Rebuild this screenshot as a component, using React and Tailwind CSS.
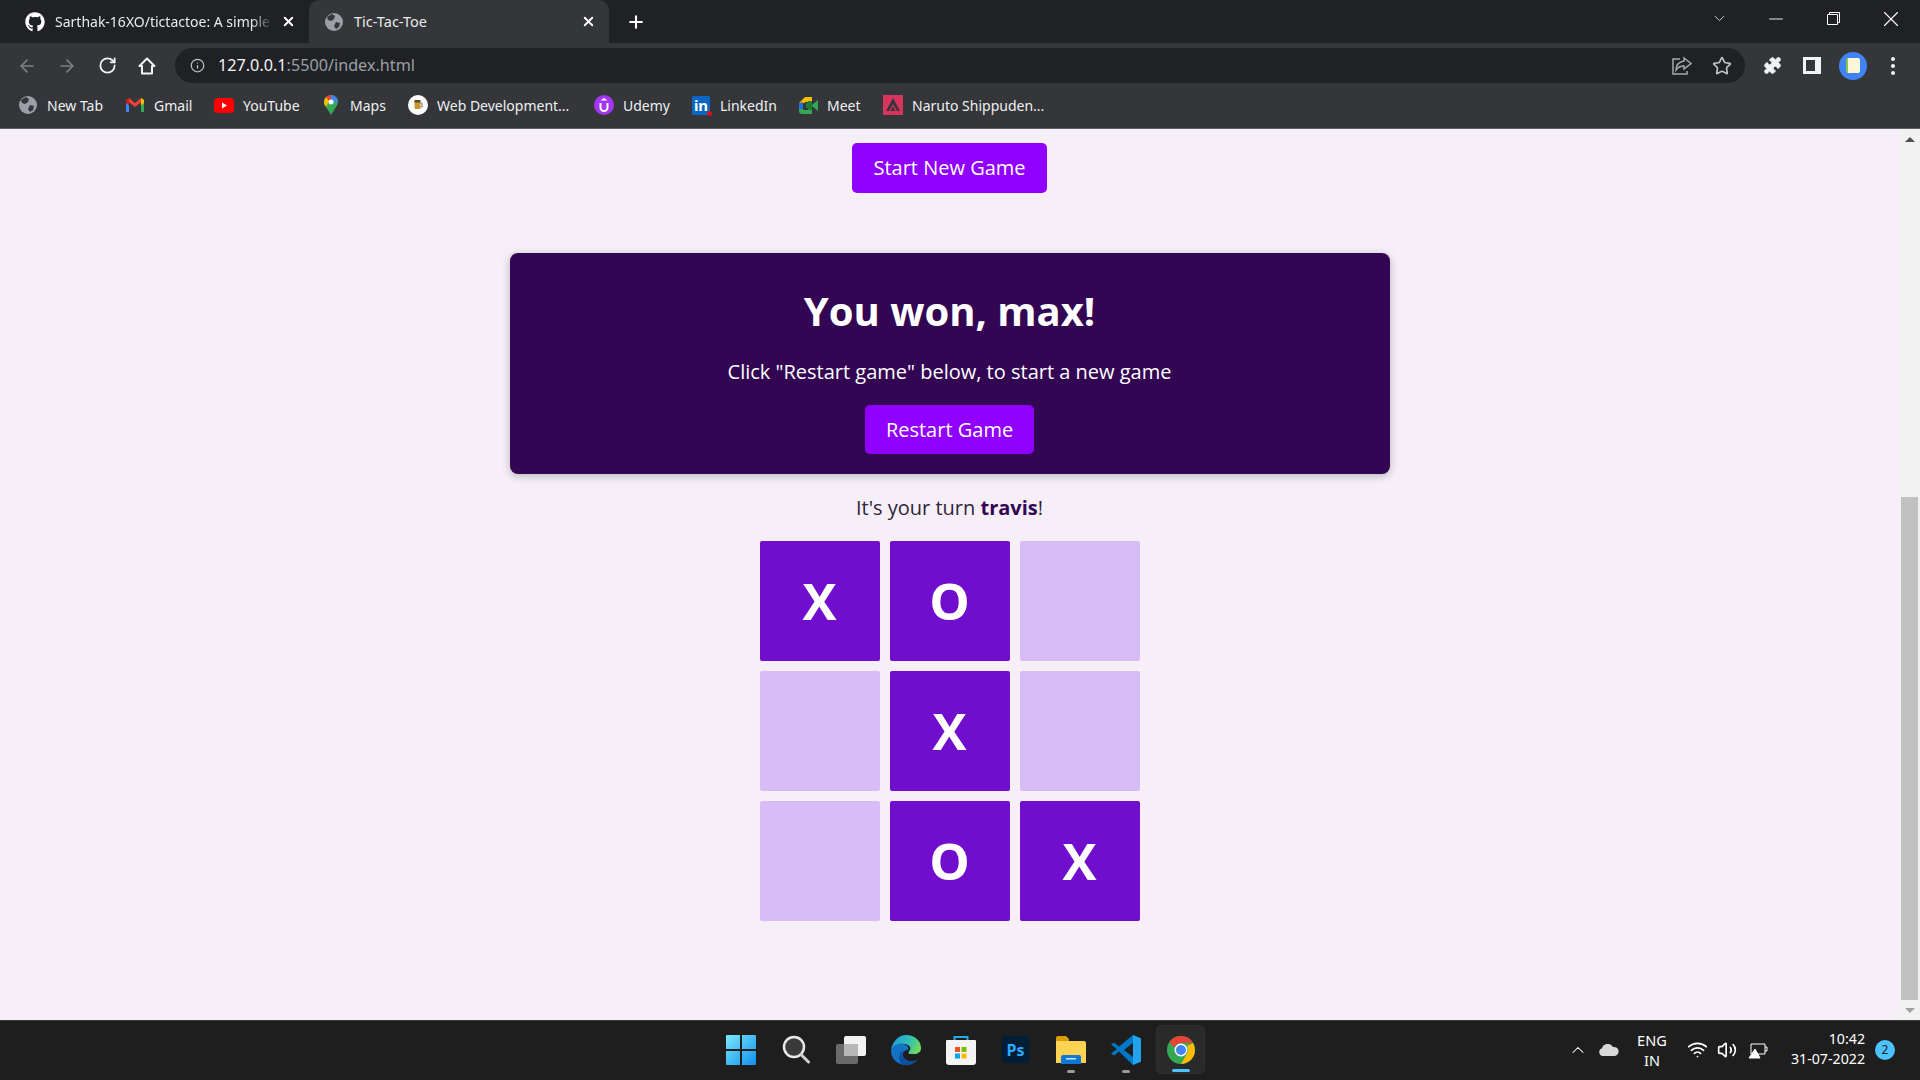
import React from 'react';
import { ArrowLeft, ArrowRight, RotateCw, Info, Star, Puzzle, ChevronDown, ChevronUp, Minus, X, Plus, Wifi, Volume2 } from 'lucide-react';
import { FaGithub } from 'react-icons/fa';

function GlobeIcon({ size = 18 }) {
    return (
        <svg width={size} height={size} viewBox="0 0 18 18" className="shrink-0">
            <circle cx="9" cy="9" r="9" fill="#9aa0a6" />
            <path d="M7 1 L10 3 L9 6 L6 8 L3 7 L2 4 Z M11 9 L15 10 L14 14 L11 16 L9 13 Z" fill="#35363a" />
        </svg>
    );
}

function GmailIcon() {
    return (
        <svg width="20" height="16" viewBox="0 0 20 16">
            <path d="M1 15V3l3 2.500V15z" fill="#4285f4" />
            <path d="M16 15V5.500L19 3v12z" fill="#34a853" />
            <path d="M1 3l9 7 9-7-3-2-6 5-6-5z" fill="#ea4335" />
            <path d="M16 1l3 2v3l-3 2.500z" fill="#fbbc04" />
            <path d="M1 3l3-2v7.500L1 6z" fill="#c5221f" />
        </svg>
    );
}

function YoutubeIcon() {
    return (
        <svg width="20" height="15" viewBox="0 0 20 15">
            <rect width="20" height="15" rx="4" fill="#f00" />
            <path d="M8 4.500l5 3-5 3z" fill="#fff" />
        </svg>
    );
}

function MapsIcon() {
    return (
        <svg width="14" height="20" viewBox="0 0 14 20">
            <path d="M7 0a7 7 0 0 1 7 7c0 2-1 3.500-2 5l-5 8-5-8C1 10.500 0 9 0 7a7 7 0 0 1 7-7z" fill="#34a853" />
            <path d="M2 2a7 7 0 0 1 5-2v4.500A2.500 2.500 0 0 0 4.700 6z" fill="#ea4335" />
            <path d="M7 0a7 7 0 0 1 7 7H9.500A2.500 2.500 0 0 0 7 4.500z" fill="#4285f4" />
            <path d="M0 7a7 7 0 0 1 2-5l3 4-3 6C1 10.500 0 9 0 7z" fill="#fbbc04" />
            <circle cx="7" cy="7" r="2.500" fill="#fff" />
        </svg>
    );
}

function WebDevIcon() {
    return (
        <svg width="20" height="20" viewBox="0 0 20 20">
            <circle cx="10" cy="10" r="10" fill="#fff" />
            <rect x="6.500" y="6" width="6" height="8" rx="1" fill="#c9982a" />
            <rect x="6.500" y="5" width="6" height="2.500" fill="#5a4a2a" />
            <path d="M12.500 8h1.500v4h-1.500" fill="none" stroke="#777" />
        </svg>
    );
}

function UdemyIcon() {
    return (
        <svg width="20" height="20" viewBox="0 0 20 20">
            <circle cx="10" cy="10" r="10" fill="#a435f0" />
            <path d="M6.500 8v4.500a3.500 3.500 0 0 0 7 0V8" fill="none" stroke="#fff" strokeWidth="2" />
            <path d="M10 3l3.500 2.500h-7z" fill="#fff" />
        </svg>
    );
}

function LinkedinIcon() {
    return (
        <div className="relative flex h-[19px] w-[18px] items-center justify-center rounded-[1px] bg-[#0a66c2] text-[15px] leading-none font-bold text-white">
            in
            <span className="absolute right-[-2px] bottom-[-1px] h-[5px] w-[5px] rounded-full bg-[#d9101f]" />
        </div>
    );
}

function MeetIcon() {
    return (
        <svg width="19" height="17" viewBox="0 0 19 17">
            <path d="M0 6l6-6h7v5H6v1z" fill="#fbbc04" />
            <path d="M0 6h4v6H0z" fill="#1a73e8" />
            <path d="M0 12h4v1h9v4H3c-2 0-3-1-3-3z" fill="#34a853" />
            <path d="M0 6l4-1v1z" fill="#ea4335" />
            <path d="M13 4v9H9v-2h-2V6h2V4z" fill="#188038" />
            <path d="M13 8l6-5v11l-6-5z" fill="#34a853" />
        </svg>
    );
}

function NarutoIcon() {
    return (
        <svg width="20" height="20" viewBox="0 0 20 20">
            <rect width="20" height="20" fill="#d8345f" />
            <path d="M10 3l7 13h-3l-4-7-4 7H3z" fill="#35363a" />
            <path d="M10 11l2.500 5h-5z" fill="#35363a" />
        </svg>
    );
}

function Bookmark({ icon, label, width }) {
    return (
        <div className={`flex items-center ${width}`}>
            <div className="flex w-5 justify-center">{icon}</div>
            <span className="ml-[9px] text-[14px] text-[#eef0f2]">{label}</span>
        </div>
    );
}

function WindowsLogo() {
    return (
        <svg width="30" height="30" viewBox="0 0 30 30">
            <defs>
                <linearGradient id="win" x1="0" y1="0" x2="1" y2="1">
                    <stop offset="0" stopColor="#7ce8fb" />
                    <stop offset="1" stopColor="#0f8fee" />
                </linearGradient>
            </defs>
            <path d="M0 1a1 1 0 0 1 1-1h13v14H0zM16 0h13a1 1 0 0 1 1 1v13H16zM0 16h14v14H1a1 1 0 0 1-1-1zM16 16h14v13a1 1 0 0 1-1 1H16z" fill="url(#win)" />
        </svg>
    );
}

function SearchIcon() {
    return (
        <svg width="28" height="30" viewBox="0 0 28 30">
            <circle cx="12" cy="12" r="10" fill="#3a3a3a" stroke="#e8e8e8" strokeWidth="2.500" />
            <path d="M19.500 20l7 7" stroke="#cfcfcf" strokeWidth="3" strokeLinecap="round" />
        </svg>
    );
}

function TaskViewIcon() {
    return (
        <svg width="30" height="28" viewBox="0 0 30 28">
            <rect x="0" y="8" width="22" height="20" rx="2" fill="#6a6a6a" />
            <rect x="8" y="0" width="22" height="20" rx="2" fill="#f2f2f2" />
            <rect x="8" y="8" width="14" height="12" fill="#b8b8b8" />
        </svg>
    );
}

function EdgeIcon() {
    return (
        <svg width="30" height="30" viewBox="0 0 30 30">
            <defs>
                <linearGradient id="edgeTop" x1="0" y1="0.300" x2="1" y2="0.600">
                    <stop offset="0" stopColor="#1a9be0" />
                    <stop offset="0.600" stopColor="#35c1b0" />
                    <stop offset="1" stopColor="#74dc55" />
                </linearGradient>
            </defs>
            <path d="M15 0c9 0 15 6 15 13 0 4-3 6-7 6h-5c-1-2 0-3 1-4 1-2 0-4-2-5-6-3-14-1-17 6C1 7 7 0 15 0z" fill="url(#edgeTop)" />
            <path d="M0 16c2-7 10-9 15-6 2 1 3 3 2 5-3 0-6 2-5 6 1 4 6 6 11 5 1 0 3-1 4-2-3 4-7 6-12 6C7 30 0 24 0 16z" fill="#1272c4" />
            <path d="M12 21c1 4 6 6 11 5 1 0 3-1 4-2-3 4-7 6-12 6-3 0-5-1-6-3-2-4 0-10 3-12-1 2-1 4 0 6z" fill="#0c4f9c" />
        </svg>
    );
}

function StoreIcon() {
    return (
        <svg width="30" height="30" viewBox="0 0 30 30">
            <path d="M8.500 7V2h13v5" fill="none" stroke="#29a9e8" strokeWidth="2" />
            <path d="M1 5h28a1 1 0 0 1 1 1v21a3 3 0 0 1-3 3H3a3 3 0 0 1-3-3V6a1 1 0 0 1 1-1z" fill="#f4f4f4" />
            <rect x="9" y="12" width="5" height="5" fill="#f25022" />
            <rect x="15.500" y="12" width="5" height="5" fill="#7fba00" />
            <rect x="9" y="18.500" width="5" height="5" fill="#00a4ef" />
            <rect x="15.500" y="18.500" width="5" height="5" fill="#ffb900" />
        </svg>
    );
}

function PhotoshopIcon() {
    return (
        <div className="flex h-[27px] w-[27px] items-center justify-center rounded-[4px] bg-[#001e36] text-[16px] leading-none font-bold text-[#31a8ff]">
            Ps
        </div>
    );
}

function FolderIcon() {
    return (
        <svg width="30" height="28" viewBox="0 0 30 28">
            <path d="M0 2a2 2 0 0 1 2-2h8l3 3v4H0z" fill="#d99c0a" />
            <path d="M0 5h28a2 2 0 0 1 2 2v20H0z" fill="#fdd354" />
            <path d="M5 21a2 2 0 0 1 2-2h16a2 2 0 0 1 2 2v7H5z" fill="#0f78d4" />
            <rect x="10" y="22" width="10" height="1.500" fill="#cfe6fa" />
        </svg>
    );
}

function VscodeIcon() {
    return (
        <svg width="30" height="30" viewBox="0 0 30 30">
            <path d="M22 0l8 3.500v23L22 30 8 16.500l-5 4-3-2 6-4.500-6-4.500 3-2 5 4z" fill="#0078c8" />
            <path d="M22 0l8 3.500v23L22 30z" fill="#22a3ee" />
            <path d="M22 8v14l-9-7z" fill="#1e1e1e" />
        </svg>
    );
}

function ChromeIcon() {
    return (
        <svg width="28" height="28" viewBox="0 0 28 28">
            <circle cx="14" cy="14" r="14" fill="#34a853" />
            <path d="M14 0a14 14 0 0 1 12.100 7H14a7 7 0 0 0-6.500 4.500L2.400 6A14 14 0 0 1 14 0z" fill="#ea4335" />
            <path d="M26.100 7A14 14 0 0 1 14 28l6-10.500A7 7 0 0 0 20 10z" fill="#fbbc04" />
            <circle cx="14" cy="14" r="6.500" fill="#fff" />
            <circle cx="14" cy="14" r="5" fill="#4285f4" />
        </svg>
    );
}

function TaskbarItem({ children, marker }) {
    return (
        <div className={`relative flex h-[49px] items-center justify-center rounded-[5px] ${marker === 'active' ? 'mx-[3px] w-[49px] border border-[#2e2e2e] bg-[#2a2a2a]' : 'w-[55px]'}`}>
            {children}
            {marker === 'active' && <span className="absolute bottom-[1px] h-[3px] w-[18px] rounded-full bg-[#4cc2ff]" />}
            {marker === 'dot' && <span className="absolute bottom-[1px] h-[3px] w-[8px] rounded-full bg-[#9a9a9a]" />}
        </div>
    );
}

function Cell({ value }) {
    return (
        <div className={`flex h-[120px] w-[120px] items-center justify-center rounded-[2px] pb-[2px] text-[51px] font-bold text-white ${value ? 'bg-[#710dcc]' : 'bg-[#d8bcf5]'}`}>
            {value}
        </div>
    );
}

const board = ['X', 'O', '', '', 'X', '', '', 'O', 'X'];

export default function App() {
    return (
        <div className="flex h-screen w-full flex-col overflow-hidden bg-[#f6eff8] font-['Noto_Sans',sans-serif]">
            {/* Tab strip */}
            <div className="flex h-[43px] shrink-0 items-end bg-[#202124]">
                <div className="flex h-[43px] w-[309px] items-center pr-[13px] pl-[25px]">
                    <FaGithub className="shrink-0 text-[20px] text-white" />
                    <span className="ml-[10px] w-[218px] overflow-hidden text-[14px] whitespace-nowrap text-[#e8eaed] [mask-image:linear-gradient(to_right,black_90%,transparent)]">Sarthak-16XO/tictactoe: A simple</span>
                    <X size={15} strokeWidth={3} className="ml-[8px] shrink-0 text-white" />
                </div>
                <div className="flex h-[43px] w-[300px] items-center rounded-t-[10px] bg-[#35363a] pr-[13px] pl-[16px]">
                    <GlobeIcon />
                    <span className="ml-[11px] flex-1 text-[14.5px] text-[#e8eaed]">Tic-Tac-Toe</span>
                    <X size={15} strokeWidth={3} className="shrink-0 text-white" />
                </div>
                <div className="flex h-[43px] w-[54px] items-center justify-center">
                    <Plus size={20} strokeWidth={2.5} className="text-white" />
                </div>
                <div className="flex h-[43px] flex-1 items-center justify-end pb-[6px] text-white">
                    <ChevronDown size={17} strokeWidth={1.25} className="mr-[37px] text-[#e0e0e0]" />
                    <Minus size={22} strokeWidth={1} className="mr-[40px]" />
                    <svg width="13" height="13" viewBox="0 0 13 13" fill="none" stroke="#fff" className="mr-[38px]">
                        <path d="M.5 2.500h10v10H.5z M2.500 2.500v-2h10v10h-2" />
                    </svg>
                    <X size={26} strokeWidth={1} className="mr-[16px]" />
                </div>
            </div>

            {/* Toolbar */}
            <div className="flex h-[43px] shrink-0 items-center bg-[#35363a] pt-[2px]">
                <div className="flex w-[175px] items-center pl-[17px]">
                    <ArrowLeft size={20} className="text-[#7d8084]" />
                    <ArrowRight size={20} className="ml-[20px] text-[#7d8084]" />
                    <RotateCw size={19} strokeWidth={2.25} className="ml-[21px] text-[#f1f3f4]" />
                    <svg width="20" height="20" viewBox="0 0 20 20" fill="none" stroke="#f1f3f4" strokeWidth="2" className="ml-[20px]">
                        <path d="M10 2.500L2.500 10H5v7.500h10V10h2.500z" strokeLinejoin="round" />
                    </svg>
                </div>
                <div className="flex h-[35px] w-[1570px] items-center rounded-full bg-[#202124] pr-[13px] pl-[15px]">
                    <Info size={15} className="text-[#bdc1c6]" />
                    <span className="ml-[13px] flex-1 text-[16.2px] text-[#9aa0a6]">
                        <span className="text-[#f1f3f4]">127.0.0.1</span>:5500/index.html
                    </span>
                    <svg width="20" height="20" viewBox="0 0 20 20" fill="none" stroke="#a5a8ac" strokeWidth="1.500">
                        <path d="M8 3H1v15h14v-3" />
                        <path d="M12 2l7 5.500-7 5.500v-3c-3 0-6 1-8 4 0-5 3-8 8-9z" />
                    </svg>
                    <Star size={20} strokeWidth={2} className="ml-[20px] text-[#bdc1c6]" />
                </div>
                <Puzzle size={19} fill="#f1f3f4" strokeWidth={1} className="ml-[18px] text-[#f1f3f4]" />
                <div className="ml-[21px] h-[17px] w-[18px] border-[3px] border-r-[6px] border-[#f1f3f4]" />
                <div className="ml-[18px] flex h-[28px] w-[28px] items-center justify-center rounded-full bg-[#3f83f5]">
                    <div className="h-[15px] w-[14px] rounded-[2px] border-l-2 border-[#8bc34a] bg-[#fdf6d8]" />
                </div>
                <div className="ml-[24px] flex flex-col gap-[3px]">
                    <span className="h-[4px] w-[4px] rounded-full bg-[#f1f3f4]" />
                    <span className="h-[4px] w-[4px] rounded-full bg-[#f1f3f4]" />
                    <span className="h-[4px] w-[4px] rounded-full bg-[#f1f3f4]" />
                </div>
            </div>

            {/* Bookmarks */}
            <div className="flex h-[43px] shrink-0 items-center border-b border-[#5f6064] bg-[#35363a] pb-[4px] pl-[18px]">
                <Bookmark icon={<GlobeIcon />} label="New Tab" width="w-[107px]" />
                <Bookmark icon={<GmailIcon />} label="Gmail" width="w-[89px]" />
                <Bookmark icon={<YoutubeIcon />} label="YouTube" width="w-[107px]" />
                <Bookmark icon={<MapsIcon />} label="Maps" width="w-[87px]" />
                <Bookmark icon={<WebDevIcon />} label="Web Development..." width="w-[186px]" />
                <Bookmark icon={<UdemyIcon />} label="Udemy" width="w-[97px]" />
                <Bookmark icon={<LinkedinIcon />} label="LinkedIn" width="w-[107px]" />
                <Bookmark icon={<MeetIcon />} label="Meet" width="w-[85px]" />
                <Bookmark icon={<NarutoIcon />} label="Naruto Shippuden..." width="w-[170px]" />
            </div>

            {/* Page */}
            <div className="flex min-h-0 flex-1">
                <main className="flex flex-1 flex-col items-center pt-[14px] font-['Open_Sans',sans-serif]">
                    <button className="h-[50px] w-[195px] rounded-[5px] bg-[#9000ff] text-[20px] text-white">Start New Game</button>

                    <section className="mt-[60px] flex h-[221px] w-[880px] flex-col items-center rounded-[8px] bg-[#330654] pt-[31px] text-white shadow-[0_2px_8px_rgba(0,0,0,0.25)]">
                        <h2 className="text-[40px] leading-[54px] font-bold">You won, max!</h2>
                        <p className="mt-[20px] text-[20px] leading-[27px]">Click "Restart game" below, to start a new game</p>
                        <button className="mt-[20px] h-[49px] w-[169px] rounded-[5px] bg-[#9000ff] text-[20px] text-white">Restart Game</button>
                    </section>

                    <p className="mt-[20px] text-[20px] leading-[27px] text-[#2f2438]">
                        It's your turn <span className="font-bold text-[#330654]">travis</span>!
                    </p>

                    <div className="mt-[20px] grid grid-cols-[120px_120px_120px] gap-[10px]">
                        {board.map((value, i) => (
                            <Cell key={i} value={value} />
                        ))}
                    </div>
                </main>

                {/* Scrollbar */}
                <div className="flex w-[21px] flex-col items-center bg-[#f1f1f1]">
                    <div className="flex h-[21px] items-center justify-center">
                        <div className="h-0 w-0 border-x-[5px] border-b-[5px] border-x-transparent border-b-[#505050]" />
                    </div>
                    <div className="mt-[347px] h-[503px] w-[17px] bg-[#c1c1c1]" />
                    <div className="flex h-[20px] items-center justify-center">
                        <div className="h-0 w-0 border-x-[5px] border-t-[5px] border-x-transparent border-t-[#a0a0a0]" />
                    </div>
                </div>
            </div>

            {/* Taskbar */}
            <div className="grid h-[60px] shrink-0 grid-cols-[1fr_auto_1fr] items-center border-t border-[#3c3c3c] bg-[#1e1e1e] pb-[2px] text-white">
                <div />
                <div className="ml-[1px] flex">
                    <TaskbarItem><WindowsLogo /></TaskbarItem>
                    <TaskbarItem><SearchIcon /></TaskbarItem>
                    <TaskbarItem><TaskViewIcon /></TaskbarItem>
                    <TaskbarItem><EdgeIcon /></TaskbarItem>
                    <TaskbarItem><StoreIcon /></TaskbarItem>
                    <TaskbarItem><PhotoshopIcon /></TaskbarItem>
                    <TaskbarItem marker="dot"><FolderIcon /></TaskbarItem>
                    <TaskbarItem marker="dot"><VscodeIcon /></TaskbarItem>
                    <TaskbarItem marker="active"><ChromeIcon /></TaskbarItem>
                </div>
                <div className="flex items-center justify-end pr-[25px]">
                    <ChevronUp size={20} strokeWidth={1.25} />
                    <svg width="20" height="12" viewBox="0 0 20 12" className="ml-[11px]">
                        <path d="M4 12a4 4 0 0 1-1-7.800A6 6 0 0 1 14 3a4.500 4.500 0 0 1 2 9z" fill="#d8d8d8" />
                    </svg>
                    <div className="ml-[15px] w-[36px] text-center text-[14.5px] leading-[20px]">ENG<br />IN</div>
                    <Wifi size={21} className="ml-[17px]" />
                    <Volume2 size={20} className="ml-[9px]" />
                    <svg width="21" height="20" viewBox="0 0 21 20" fill="none" stroke="#fff" className="ml-[11px]">
                        <path d="M3 4h14v10H3z M17 7h2v4h-2" />
                        <path d="M7 9l5 9H1z" fill="#fff" />
                    </svg>
                    <div className="mb-[2px] ml-[22px] text-right text-[14.2px] leading-[20px]">10:42<br />31-07-2022</div>
                    <div className="ml-[10px] flex h-[20px] w-[20px] items-center justify-center rounded-full bg-[#4cc2ff] text-[12px] text-[#1e1e1e]">2</div>
                </div>
            </div>
        </div>
    );
}
